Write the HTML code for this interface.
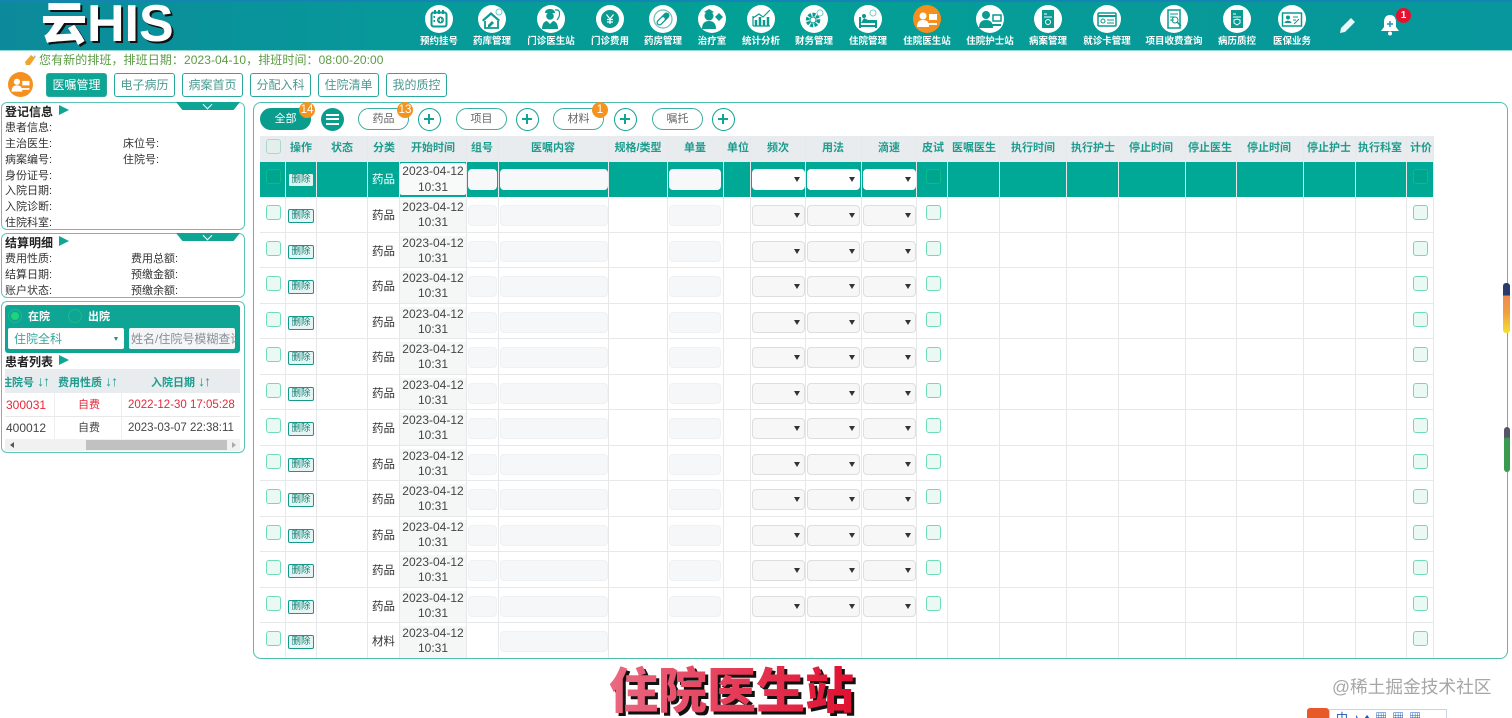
<!DOCTYPE html>
<html lang="zh"><head><meta charset="utf-8"><title>住院医生站</title>
<style>
*{box-sizing:border-box;margin:0;padding:0}
html,body{width:1512px;height:718px;overflow:hidden;background:#fff}
body{position:relative;font-family:"Liberation Sans","Noto Sans CJK SC",sans-serif;font-size:11px;color:#333}
#top{position:absolute;left:0;top:0;width:1512px;height:51px;background:linear-gradient(90deg,#0c8a9b 0,#07989a 25%,#03a095 50%,#079a98 75%,#07979c 100%);border-top:2px solid #1583b5;border-bottom:1px solid #8fdcd4}
#logo1{position:absolute;left:41px;top:-8px;font-size:46px;font-weight:900;color:#fff;text-shadow:2px 2px 0 #111;white-space:nowrap;line-height:64px}
#logo2{position:absolute;left:87px;top:-6px;font-size:52px;font-weight:700;color:#fff;text-shadow:2px 2px 0 #111;white-space:nowrap;line-height:60px}
.n{position:absolute;top:35px;width:80px;margin-left:-40px;text-align:center;color:#fff;font-size:9.5px;font-weight:700;line-height:14px;white-space:nowrap}
.ic{position:absolute;top:5px;width:28px;height:28px;margin-left:-14px}
#notice{position:absolute;left:39px;top:52px;color:#5a9c42;font-size:12px;line-height:16px;white-space:nowrap;letter-spacing:.08px}
.tab{position:absolute;top:73px;width:61px;height:24px;border:1px solid #2aa89b;border-radius:3px;color:#4a9a90;text-align:center;line-height:22px;font-size:12px}
.tab.on{background:#0fa594;color:#fff}
.p{position:absolute;left:1px;width:244px;border:1.5px solid #5cc5b8;border-radius:6px;background:#fff}
.tr{position:absolute;left:176px;width:64px;height:8px;background:#0fa594;clip-path:polygon(0 0,100% 0,90% 100%,10% 100%)}
.tr:after{content:"";position:absolute;left:28px;top:-1px;width:6px;height:6px;border-right:1px solid #fff;border-bottom:1px solid #fff;transform:rotate(45deg)}
.l{position:absolute;font-size:11px;line-height:14px;white-space:nowrap;color:#333}
.l span{font-size:14px;font-weight:400;line-height:14px;letter-spacing:-1px}
.h{position:absolute;left:5px;font-size:12px;font-weight:700;line-height:14px;color:#222;white-space:nowrap}
.ar{position:absolute;left:59px;width:0;height:0;border-left:10px solid #0fa594;border-top:5.5px solid transparent;border-bottom:5.5px solid transparent}
#main{position:absolute;left:253px;top:102px;width:1255px;height:557px;border:1.5px solid #4dbdae;border-radius:8px}
.pill{position:absolute;top:108px;width:51px;height:22px;border:1px solid #3eaea1;border-radius:11px;text-align:center;line-height:21px;color:#666;font-size:11px}
.pill.on{background:#0a9c8d;color:#fff;border-color:#0a9c8d}
.bd{position:absolute;top:102px;width:16px;height:16px;margin-left:-8px;background:#f5931f;border-radius:50%;color:#fff;text-align:center;line-height:16px;font-size:11.5px}
.pl{position:absolute;top:108px;width:23px;height:23px;margin-left:-11px;border:1.5px solid #0fa594;border-radius:50%;background:#fff}
.pl:before,.pl:after{content:"";position:absolute;background:#0fa594}
.pl:before{left:5px;top:9px;width:10px;height:2px}
.pl:after{left:9px;top:5px;width:2px;height:10px}
#hd{position:absolute;left:260px;top:136px;width:1174px;height:26px;background:#e9ecef}
.th{position:absolute;top:136px;height:26px;line-height:25px;width:70px;margin-left:-35px;text-align:center;color:#1d9c8e;font-weight:700;font-size:11px;white-space:nowrap}
.r{position:absolute;left:0;width:1434px;height:35.5px}
.r>*{position:absolute;display:block;text-decoration:none;font-style:normal;font-weight:400}
.cb{width:15px;height:15px;top:8px;border:1.5px solid #6fdcb8;border-radius:3px;background:#eaf9f4}
.c1{left:266px}.c2{left:926px}.c3{left:1413px}
.del{left:288px;top:12px;width:26px;height:14px;border:1.5px solid #149a8b;border-radius:2px;font-size:9.5px;line-height:11px;text-align:center;color:#127f74;background:#e6f5f3}
.cat{left:368px;top:10px;width:31px;text-align:center;line-height:18px;font-size:11.5px;color:#333}
.dt{left:400px;top:3px;width:66px;height:32.5px;background:#f5f6f6;text-align:center;font-size:12px;line-height:15px;color:#444}
.lastd{height:32px}
.in{top:8px;height:21px;background:#f6f7f8;border-radius:4px;border:1px solid #f0f1f2}
.i1{left:468px;width:29px}.i2{left:500px;width:108px}.i3{left:669px;width:52px}
.se{top:8px;height:21px;background:#f7f7f8;border:1px solid #dcdedf;border-radius:4px}
.se:after{content:"";position:absolute;right:4px;top:7px;border-left:3px solid transparent;border-right:3px solid transparent;border-top:5px solid #333}
.s1{left:752px;width:53px}.s2{left:807px;width:53px}.s3{left:863px;width:53px}
.sel{background:#00a896;height:34.5px}
.sel .cb{background:#00a58f;border-color:#0cbb8a;top:7px}
.sel .del{border-color:#00a896;background:#dff2ef;top:11px}
.sel .cat{color:#fff;top:9px}
.sel .dt{background:#f8f9f9;top:1px;height:32px;line-height:16px;border-radius:2px}
.sel .in{background:#f7f8f9;border-color:#f7f8f9;top:7px}
.sel .se{background:#fff;border-color:#fff;top:7px}
.v{position:absolute;top:136px;width:1px;height:522px;background:#e6e8ea}
.hl{position:absolute;left:260px;width:1174px;height:1px;background:#e6e8ea}
#title{position:absolute;left:609px;top:658px;font-size:49px;font-weight:900;line-height:68px;white-space:nowrap;background:linear-gradient(90deg,#ea6a82,#e01030);-webkit-background-clip:text;background-clip:text;color:transparent;filter:drop-shadow(3px 3px 0 #111)}
#wm{position:absolute;left:1332px;top:676px;font-size:17.7px;line-height:22px;color:#a6a6a6;white-space:nowrap}
</style></head><body>

<div id="top"></div>
<div id="logo1">云</div><div id="logo2">HIS</div>

<svg class="ic" style="left:439px" viewBox="0 0 28 28"><circle cx="14" cy="14" r="14" fill="#fff"/><rect x="6.5" y="7.5" width="15" height="14" rx="2" fill="none" stroke="#0a9a90" stroke-width="2"/><path d="M10 5v4M14 5v4M18 5v4M8.500 12h1.500M8.500 16h1.500" stroke="#0a9a90" stroke-width="2"/><circle cx="15.500" cy="15" r="3.500" fill="#0a9a90"/><path d="M13.500 15h4M15.500 13v4" stroke="#fff"/></svg>
<svg class="ic" style="left:492px" viewBox="0 0 28 28"><circle cx="14" cy="14" r="14" fill="#fff"/><path d="M4 15 13 7l9 8-1.500 1.500L13 10l-7.500 6.500z" fill="#0a9a90"/><path d="M7 16v7h13v-7" fill="none" stroke="#0a9a90" stroke-width="1.800"/><path d="M10 20l4-4 2 2-4 4h-2z" fill="#0a9a90"/><circle cx="21" cy="7" r="3" fill="none" stroke="#6cc"/></svg>
<svg class="ic" style="left:551px" viewBox="0 0 28 28"><circle cx="14" cy="14" r="14" fill="#fff"/><path d="M8 8c0-3 2.500-4 5-4s5 1 5 4z" fill="#0a9a90"/><circle cx="13" cy="11" r="3.800" fill="#0a9a90"/><path d="M5 24c0-6 3-8 5-8l3 3 3-3c2 0 5 2 5 8z" fill="#0a9a90"/><path d="M18 5c5-1 5 3 4 7l-2 3" fill="none" stroke="#0a9a90" stroke-width="1.200"/></svg>
<svg class="ic" style="left:610px" viewBox="0 0 28 28"><circle cx="14" cy="14" r="14" fill="#fff"/><circle cx="14" cy="14" r="9" fill="#0a9a90"/><path d="M10.500 9.500 14 14l3.500-4.500M14 14v5M11 14.500h6M11 17h6" stroke="#fff" stroke-width="1.300" fill="none"/></svg>
<svg class="ic" style="left:663px" viewBox="0 0 28 28"><circle cx="14" cy="14" r="14" fill="#fff"/><circle cx="14" cy="14" r="9" fill="none" stroke="#6dbdb5" stroke-width="1.200"/><path d="M10.500 17.500 17.500 10.500" stroke="#0a9a90" stroke-width="6" stroke-linecap="round"/><path d="M10.500 17.500 14 14" stroke="#fff" stroke-width="3.400" stroke-linecap="round"/></svg>
<svg class="ic" style="left:712px" viewBox="0 0 28 28"><circle cx="14" cy="14" r="14" fill="#fff"/><circle cx="11" cy="11" r="4.500" fill="#0a9a90"/><path d="M4 24c0-6 3-8 7-8s7 2 7 8z" fill="#0a9a90"/><path d="M6 7l5-3 5 3-5 2z" fill="#0a9a90"/><path d="M21 8l4 4-4 4-4-4z" fill="#0a9a90"/></svg>
<svg class="ic" style="left:761px" viewBox="0 0 28 28"><circle cx="14" cy="14" r="14" fill="#fff"/><path d="M6 21V11M6 21h17" stroke="#0a9a90" stroke-width="1.200" fill="none"/><path d="M9 21v-6M13 21v-9M17 21v-6M21 21v-9" stroke="#0a9a90" stroke-width="2.500"/><path d="M6 13l6-4 4 3 7-7" stroke="#0a9a90" stroke-width="1.200" fill="none"/></svg>
<svg class="ic" style="left:814px" viewBox="0 0 28 28"><circle cx="14" cy="14" r="14" fill="#fff"/><circle cx="13" cy="15" r="5.500" fill="none" stroke="#0a9a90" stroke-width="3.500" stroke-dasharray="3 1.200"/><circle cx="13" cy="15" r="3" fill="none" stroke="#0a9a90"/><circle cx="20" cy="8" r="3" fill="none" stroke="#7cc"/></svg>
<svg class="ic" style="left:868px" viewBox="0 0 28 28"><circle cx="14" cy="14" r="14" fill="#fff"/><path d="M6 12v11M22 15v8M6 21h16" stroke="#0a9a90" stroke-width="2" fill="none"/><path d="M7 18h15v-3H14l-4-2z" fill="#0a9a90"/><circle cx="10" cy="11" r="2" fill="#0a9a90"/><circle cx="19" cy="8" r="3" fill="none" stroke="#7cc"/></svg>
<svg class="ic" style="left:927px" viewBox="0 0 28 28"><circle cx="14" cy="14" r="14" fill="#f5901e"/><circle cx="10" cy="11" r="3.500" fill="#fff"/><path d="M4 22c0-5 2-7 6-7s6 2 6 7z" fill="#fff"/><rect x="16" y="9" width="8" height="6" fill="#fff"/><path d="M14 19h10" stroke="#fff" stroke-width="2"/></svg>
<svg class="ic" style="left:990px" viewBox="0 0 28 28"><circle cx="14" cy="14" r="14" fill="#fff"/><circle cx="10" cy="10" r="4" fill="#0a9a90"/><path d="M3 23c0-6 3-8 7-8s7 2 7 8z" fill="#0a9a90"/><rect x="17" y="10" width="8" height="6" fill="none" stroke="#0a9a90" stroke-width="1.500"/><path d="M16 20h9" stroke="#0a9a90" stroke-width="2"/></svg>
<svg class="ic" style="left:1048px" viewBox="0 0 28 28"><circle cx="14" cy="14" r="14" fill="#fff"/><rect x="8" y="5" width="12" height="18" fill="#0a9a90"/><path d="M10 9h3M10 12h8" stroke="#fff"/><circle cx="14" cy="17" r="2.500" fill="none" stroke="#fff"/></svg>
<svg class="ic" style="left:1107px" viewBox="0 0 28 28"><circle cx="14" cy="14" r="14" fill="#fff"/><rect x="5" y="8" width="18" height="13" rx="1" fill="none" stroke="#0a9a90" stroke-width="1.500"/><path d="M5 11h18" stroke="#0a9a90" stroke-width="2"/><circle cx="10" cy="16" r="2" fill="none" stroke="#0a9a90"/><path d="M14 15h7M14 18h7" stroke="#0a9a90"/></svg>
<svg class="ic" style="left:1174px" viewBox="0 0 28 28"><circle cx="14" cy="14" r="14" fill="#fff"/><rect x="8" y="5" width="12" height="18" fill="none" stroke="#0a9a90" stroke-width="1.500"/><path d="M10 9h8M10 12h5M10 15h4" stroke="#0a9a90"/><circle cx="15" cy="15" r="3" fill="none" stroke="#0a9a90"/><path d="M17 17l4 4" stroke="#0a9a90" stroke-width="1.500"/></svg>
<svg class="ic" style="left:1237px" viewBox="0 0 28 28"><circle cx="14" cy="14" r="14" fill="#fff"/><rect x="8" y="5" width="12" height="18" fill="#0a9a90"/><path d="M10 9h3M10 12h8" stroke="#fff"/><path d="M14 14l3 1v3l-3 2-3-2v-3z" fill="none" stroke="#fff"/></svg>
<svg class="ic" style="left:1292px" viewBox="0 0 28 28"><circle cx="14" cy="14" r="14" fill="#fff"/><rect x="4.500" y="8" width="19" height="13" fill="none" stroke="#0a9a90" stroke-width="1.500"/><circle cx="10" cy="12.500" r="2" fill="#0a9a90"/><path d="M6.500 18c0-3 7-3 7 0z" fill="#0a9a90"/><path d="M15 12h5M15 15h3M16 19l5-5" stroke="#0a9a90"/></svg>

<div class="n" style="left:439px">预约挂号</div><div class="n" style="left:492px">药库管理</div><div class="n" style="left:551px">门诊医生站</div><div class="n" style="left:610px">门诊费用</div><div class="n" style="left:663px">药房管理</div><div class="n" style="left:712px">治疗室</div><div class="n" style="left:761px">统计分析</div><div class="n" style="left:814px">财务管理</div><div class="n" style="left:868px">住院管理</div><div class="n" style="left:927px">住院医生站</div><div class="n" style="left:990px">住院护士站</div><div class="n" style="left:1048px">病案管理</div><div class="n" style="left:1107px">就诊卡管理</div><div class="n" style="left:1174px">项目收费查询</div><div class="n" style="left:1237px">病历质控</div><div class="n" style="left:1292px">医保业务</div>

<svg style="position:absolute;left:1339px;top:16px" width="18" height="18" viewBox="0 0 18 18"><path d="M1 17l1-5L12 2l4 4L6 16z" fill="#fff" opacity=".92"/></svg>
<svg style="position:absolute;left:1381px;top:14px" width="18" height="22" viewBox="0 0 18 22"><path d="M9 1c4 0 6 3 6 7v5l3 4H0l3-4V8c0-4 2-7 6-7z" fill="#fff"/><circle cx="9" cy="19.500" r="2" fill="#fff"/><path d="M6 10h6M9 7v6" stroke="#2a90c0" stroke-width="1.500"/></svg>
<div style="position:absolute;left:1396px;top:8px;width:15px;height:15px;border-radius:50%;background:#e8112d;color:#fff;font-size:10px;font-weight:700;text-align:center;line-height:15px">1</div>

<svg style="position:absolute;left:24px;top:54px" width="13" height="13" viewBox="0 0 13 13"><path d="M2 11 1 8l6-7 4 3-5 7z" fill="#eda62e"/><path d="M10 1l2 2-2 1z" fill="#8ab4d8"/></svg>
<div id="notice">您有新的排班，排班日期：2023-04-10，排班时间：08:00-20:00</div>

<svg style="position:absolute;left:8px;top:72px" width="25" height="25" viewBox="0 0 28 28"><circle cx="14" cy="14" r="14" fill="#f5901e"/><circle cx="10" cy="11" r="3.500" fill="#fff"/><path d="M4 22c0-5 2-7 6-7s6 2 6 7z" fill="#fff"/><rect x="16" y="10" width="8" height="5" fill="#fff"/><path d="M14 19h10" stroke="#fff" stroke-width="2"/></svg>
<div class="tab on" style="left:46px">医嘱管理</div><div class="tab" style="left:114px">电子病历</div><div class="tab" style="left:182px">病案首页</div><div class="tab" style="left:250px">分配入科</div><div class="tab" style="left:318px">住院清单</div><div class="tab" style="left:386px">我的质控</div>

<div class="p" style="top:102px;height:128px"></div>
<div class="tr" style="top:102px"></div>
<div class="h" style="top:105px">登记信息</div><div class="ar" style="top:105px"></div>
<div class="l" style="left:5px;top:121px">患者信息:</div>
<div class="l" style="left:5px;top:137px">主治医生:</div><div class="l" style="left:123px;top:137px">床位号:</div>
<div class="l" style="left:5px;top:153px">病案编号:</div><div class="l" style="left:123px;top:153px">住院号:</div>
<div class="l" style="left:5px;top:169px">身份证号:</div>
<div class="l" style="left:5px;top:184px">入院日期:</div>
<div class="l" style="left:5px;top:200px">入院诊断:</div>
<div class="l" style="left:5px;top:216px">住院科室:</div>

<div class="p" style="top:233px;height:65px"></div>
<div class="tr" style="top:233px"></div>
<div class="h" style="top:236px">结算明细</div><div class="ar" style="top:236px"></div>
<div class="l" style="left:5px;top:252px">费用性质:</div><div class="l" style="left:131px;top:252px">费用总额:</div>
<div class="l" style="left:5px;top:268px">结算日期:</div><div class="l" style="left:131px;top:268px">预缴金额:</div>
<div class="l" style="left:5px;top:284px">账户状态:</div><div class="l" style="left:131px;top:284px">预缴余额:</div>

<div class="p" style="top:301px;height:152px"></div>
<div style="position:absolute;left:5px;top:305px;width:235px;height:48px;background:#0fa594;border-radius:3px"></div>
<div style="position:absolute;left:8px;top:309px;width:14px;height:14px;border-radius:50%;border:1px solid #1bb98c;background:#0fa594"></div>
<div style="position:absolute;left:11px;top:312px;width:8px;height:8px;border-radius:50%;background:#20d27c"></div>
<div class="l" style="left:28px;top:310px;color:#fff;font-weight:700">在院</div>
<div style="position:absolute;left:68px;top:309px;width:14px;height:14px;border-radius:50%;border:1px solid #1bb98c"></div>
<div class="l" style="left:88px;top:310px;color:#fff;font-weight:700">出院</div>
<div style="position:absolute;left:8px;top:328px;width:116px;height:21px;background:#fff;border-radius:2px;color:#3aa89b;font-size:12px;line-height:22px;padding-left:6px">住院全科</div>
<div style="position:absolute;left:114px;top:337px;border-left:2.5px solid transparent;border-right:2.500px solid transparent;border-top:4px solid #2a8a80"></div>
<div style="position:absolute;left:129px;top:328px;width:106px;height:21px;background:#f4f5f7;border-radius:2px;color:#8a8f96;font-size:12px;line-height:22px;padding-left:2px;overflow:hidden;white-space:nowrap">姓名/住院号模糊查询</div>
<div class="h" style="top:355px">患者列表</div><div class="ar" style="top:355px"></div>
<div style="position:absolute;left:5px;top:369px;width:235px;height:24px;background:#e9ecef"></div>
<div style="position:absolute;left:5px;top:369px;width:49px;height:24px;overflow:hidden"><div class="l" style="left:-4px;top:5px;color:#1d9c8e;font-weight:700">住院号 <span>↓↑</span></div></div>
<div class="l" style="left:58px;top:374px;color:#1d9c8e;font-weight:700">费用性质 <span>↓↑</span></div>
<div class="l" style="left:151px;top:374px;color:#1d9c8e;font-weight:700">入院日期 <span>↓↑</span></div>
<div class="l" style="left:6px;top:398px;font-size:12px;color:#e5283a">300031</div>
<div class="l" style="left:78px;top:398px;color:#e5283a">自费</div>
<div class="l" style="left:128px;top:398px;font-size:11.5px;color:#e5283a">2022-12-30 17:05:28</div>
<div class="l" style="left:6px;top:421px;font-size:12px;color:#444">400012</div>
<div class="l" style="left:78px;top:421px;color:#444">自费</div>
<div class="l" style="left:128px;top:421px;font-size:11.5px;color:#444">2023-03-07 22:38:11</div>
<div style="position:absolute;left:5px;top:416px;width:235px;height:1px;background:#e6e8ea"></div>
<div style="position:absolute;left:54px;top:393px;width:1px;height:46px;background:#eceef0"></div>
<div style="position:absolute;left:121px;top:393px;width:1px;height:46px;background:#eceef0"></div>
<div style="position:absolute;left:5px;top:439px;width:235px;height:12px;background:#f1f1f1"></div>
<div style="position:absolute;left:86px;top:440px;width:141px;height:10px;background:#c1c1c1"></div>
<div style="position:absolute;left:10px;top:442px;border-right:4px solid #555;border-top:3px solid transparent;border-bottom:3px solid transparent"></div>
<div style="position:absolute;left:232px;top:442px;border-left:4px solid #aaa;border-top:3px solid transparent;border-bottom:3px solid transparent"></div>

<div id="main"></div>
<div class="pill on" style="left:260px">全部</div><div class="bd" style="left:307px">14</div>
<div style="position:absolute;left:321px;top:108px;width:23px;height:23px;border-radius:50%;background:#0a9c8d"></div>
<div style="position:absolute;left:326px;top:114px;width:13px;height:11px;border-top:2px solid #fff;border-bottom:2px solid #fff"></div>
<div style="position:absolute;left:326px;top:118px;width:13px;height:2px;background:#fff"></div>
<div class="pill" style="left:358px">药品</div><div class="bd" style="left:405px">13</div><div class="pl" style="left:429px"></div>
<div class="pill" style="left:456px">项目</div><div class="pl" style="left:527px"></div>
<div class="pill" style="left:553px">材料</div><div class="bd" style="left:600px">1</div><div class="pl" style="left:625px"></div>
<div class="pill" style="left:652px">嘱托</div><div class="pl" style="left:723px"></div>

<div id="hd"></div>
<div class="cb" style="position:absolute;left:266px;top:139px;background:#e4efec;border-color:#a9d8cc"></div>
<div class="th" style="left:301px">操作</div><div class="th" style="left:342px">状态</div><div class="th" style="left:384px">分类</div><div class="th" style="left:433px">开始时间</div><div class="th" style="left:482px">组号</div><div class="th" style="left:553px">医嘱内容</div><div class="th" style="left:638px">规格/类型</div><div class="th" style="left:695px">单量</div><div class="th" style="left:738px">单位</div><div class="th" style="left:778px">频次</div><div class="th" style="left:833px">用法</div><div class="th" style="left:889px">滴速</div><div class="th" style="left:933px">皮试</div><div class="th" style="left:974px">医嘱医生</div><div class="th" style="left:1033px">执行时间</div><div class="th" style="left:1093px">执行护士</div><div class="th" style="left:1151px">停止时间</div><div class="th" style="left:1210px">停止医生</div><div class="th" style="left:1269px">停止时间</div><div class="th" style="left:1329px">停止护士</div><div class="th" style="left:1380px">执行科室</div><div class="th" style="left:1421px">计价</div>

<div class="r sel" style="top:162px;left:260px;width:1174px"></div>
<div class="r sel" style="top:162px;background:none"><i class="cb c1"></i><b class="del">删除</b><s class="cat">药品</s><u class="dt">2023-04-12<br>10:31</u><em class="in i1"></em><em class="in i2"></em><em class="in i3"></em><span class="se s1"></span><span class="se s2"></span><span class="se s3"></span><i class="cb c2"></i><i class="cb c3"></i></div>
<div class="r" style="top:197px"><i class="cb c1"></i><b class="del">删除</b><s class="cat">药品</s><u class="dt">2023-04-12<br>10:31</u><em class="in i1"></em><em class="in i2"></em><em class="in i3"></em><span class="se s1"></span><span class="se s2"></span><span class="se s3"></span><i class="cb c2"></i><i class="cb c3"></i></div>
<div class="r" style="top:232.5px"><i class="cb c1"></i><b class="del">删除</b><s class="cat">药品</s><u class="dt">2023-04-12<br>10:31</u><em class="in i1"></em><em class="in i2"></em><em class="in i3"></em><span class="se s1"></span><span class="se s2"></span><span class="se s3"></span><i class="cb c2"></i><i class="cb c3"></i></div>
<div class="r" style="top:268px"><i class="cb c1"></i><b class="del">删除</b><s class="cat">药品</s><u class="dt">2023-04-12<br>10:31</u><em class="in i1"></em><em class="in i2"></em><em class="in i3"></em><span class="se s1"></span><span class="se s2"></span><span class="se s3"></span><i class="cb c2"></i><i class="cb c3"></i></div>
<div class="r" style="top:303.5px"><i class="cb c1"></i><b class="del">删除</b><s class="cat">药品</s><u class="dt">2023-04-12<br>10:31</u><em class="in i1"></em><em class="in i2"></em><em class="in i3"></em><span class="se s1"></span><span class="se s2"></span><span class="se s3"></span><i class="cb c2"></i><i class="cb c3"></i></div>
<div class="r" style="top:339px"><i class="cb c1"></i><b class="del">删除</b><s class="cat">药品</s><u class="dt">2023-04-12<br>10:31</u><em class="in i1"></em><em class="in i2"></em><em class="in i3"></em><span class="se s1"></span><span class="se s2"></span><span class="se s3"></span><i class="cb c2"></i><i class="cb c3"></i></div>
<div class="r" style="top:374.5px"><i class="cb c1"></i><b class="del">删除</b><s class="cat">药品</s><u class="dt">2023-04-12<br>10:31</u><em class="in i1"></em><em class="in i2"></em><em class="in i3"></em><span class="se s1"></span><span class="se s2"></span><span class="se s3"></span><i class="cb c2"></i><i class="cb c3"></i></div>
<div class="r" style="top:410px"><i class="cb c1"></i><b class="del">删除</b><s class="cat">药品</s><u class="dt">2023-04-12<br>10:31</u><em class="in i1"></em><em class="in i2"></em><em class="in i3"></em><span class="se s1"></span><span class="se s2"></span><span class="se s3"></span><i class="cb c2"></i><i class="cb c3"></i></div>
<div class="r" style="top:445.5px"><i class="cb c1"></i><b class="del">删除</b><s class="cat">药品</s><u class="dt">2023-04-12<br>10:31</u><em class="in i1"></em><em class="in i2"></em><em class="in i3"></em><span class="se s1"></span><span class="se s2"></span><span class="se s3"></span><i class="cb c2"></i><i class="cb c3"></i></div>
<div class="r" style="top:481px"><i class="cb c1"></i><b class="del">删除</b><s class="cat">药品</s><u class="dt">2023-04-12<br>10:31</u><em class="in i1"></em><em class="in i2"></em><em class="in i3"></em><span class="se s1"></span><span class="se s2"></span><span class="se s3"></span><i class="cb c2"></i><i class="cb c3"></i></div>
<div class="r" style="top:516.5px"><i class="cb c1"></i><b class="del">删除</b><s class="cat">药品</s><u class="dt">2023-04-12<br>10:31</u><em class="in i1"></em><em class="in i2"></em><em class="in i3"></em><span class="se s1"></span><span class="se s2"></span><span class="se s3"></span><i class="cb c2"></i><i class="cb c3"></i></div>
<div class="r" style="top:552px"><i class="cb c1"></i><b class="del">删除</b><s class="cat">药品</s><u class="dt">2023-04-12<br>10:31</u><em class="in i1"></em><em class="in i2"></em><em class="in i3"></em><span class="se s1"></span><span class="se s2"></span><span class="se s3"></span><i class="cb c2"></i><i class="cb c3"></i></div>
<div class="r" style="top:587.5px"><i class="cb c1"></i><b class="del">删除</b><s class="cat">药品</s><u class="dt">2023-04-12<br>10:31</u><em class="in i1"></em><em class="in i2"></em><em class="in i3"></em><span class="se s1"></span><span class="se s2"></span><span class="se s3"></span><i class="cb c2"></i><i class="cb c3"></i></div>
<div class="r" style="top:623px"><i class="cb c1"></i><b class="del">删除</b><s class="cat">材料</s><u class="dt lastd">2023-04-12<br>10:31</u><em class="in i2"></em><i class="cb c3"></i></div>

<div class="v" style="left:285px"></div><div class="v" style="left:316px"></div><div class="v" style="left:367px"></div><div class="v" style="left:399px"></div><div class="v" style="left:466px"></div><div class="v" style="left:498px"></div><div class="v" style="left:608px"></div><div class="v" style="left:667px"></div><div class="v" style="left:723px"></div><div class="v" style="left:750px"></div><div class="v" style="left:805px"></div><div class="v" style="left:861px"></div><div class="v" style="left:916px"></div><div class="v" style="left:947px"></div><div class="v" style="left:999px"></div><div class="v" style="left:1066px"></div><div class="v" style="left:1118px"></div><div class="v" style="left:1185px"></div><div class="v" style="left:1236px"></div><div class="v" style="left:1303px"></div><div class="v" style="left:1355px"></div><div class="v" style="left:1406px"></div><div class="v" style="left:1433px"></div>
<div class="hl" style="top:232px"></div><div class="hl" style="top:267px"></div><div class="hl" style="top:303px"></div><div class="hl" style="top:338px"></div><div class="hl" style="top:374px"></div><div class="hl" style="top:409px"></div><div class="hl" style="top:445px"></div><div class="hl" style="top:480px"></div><div class="hl" style="top:516px"></div><div class="hl" style="top:551px"></div><div class="hl" style="top:587px"></div><div class="hl" style="top:622px"></div>

<div style="position:absolute;left:1503px;top:283px;width:7px;height:50px;border-radius:3px;background:linear-gradient(#2a3a6a 0,#2a3a6a 24%,#ef8a50 26%,#f0a040 60%,#f5e030 100%)"></div>
<div style="position:absolute;left:1504px;top:427px;width:6px;height:45px;border-radius:3px;background:linear-gradient(#556 0,#556 22%,#3a9a50 26%,#3a9a50 100%)"></div>

<div id="title">住院医生站</div>
<div id="wm">@稀土掘金技术社区</div>
<div style="position:absolute;left:1307px;top:708px;width:22px;height:10px;background:#e8592a;border-radius:3px 3px 0 0"></div>
<div style="position:absolute;left:1329px;top:709px;width:118px;height:9px;background:#fff;border:1px solid #c8d4e6;border-bottom:0;overflow:hidden;color:#1a55b0;font-size:12px;line-height:16px;padding-left:6px;letter-spacing:5px;white-space:nowrap">中♪♦▦▦▦</div>
</body></html>
